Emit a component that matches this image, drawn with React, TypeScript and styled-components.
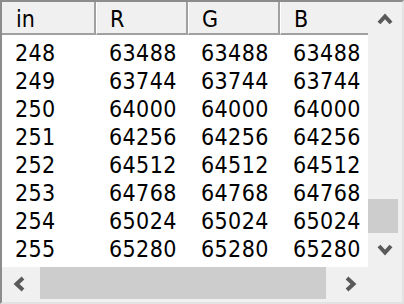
import React from "react";
import styled, {createGlobalStyle} from "styled-components";

const GlobalStyle = createGlobalStyle`
    html, body {
        margin: 0;
        padding: 0;
        background: #ffffff;
    }
`

const Frame = styled.div`
    box-sizing: border-box;
    width: 404px;
    height: 304px;
    border-style: solid;
    border-width: 2px;
    border-color: #8c8c8c #e3e3e3 #e3e3e3 #8c8c8c;
    display: grid;
    grid-template-columns: 366px 34px;
    grid-template-rows: 265px 35px;
    background: #f0f0f0;
    font-family: "DejaVu Sans Condensed", "Liberation Sans", sans-serif;
    color: #000;
`
const List = styled.div`
    background: #fff;
    overflow: hidden;
`
const HeaderRow = styled.div`
    display: flex;
    height: 33px;
    margin-bottom: 3px;
`
const HeaderCell = styled.div<{ $w: number; $first?: boolean; $last?: boolean }>`
    box-sizing: border-box;
    width: ${p => p.$w}px;
    flex: none;
    background: #f0f0f0;
    border-bottom: 2px solid #a0a0a0;
    border-right: ${p => p.$last ? "none" : "2px solid #a0a0a0"};
    border-left: ${p => p.$first ? "none" : "1px solid #ffffff"};
    padding-left: ${p => p.$first ? 14 : 13}px;
    font-size: 23px;
    line-height: 34px;
`
const Row = styled.div`
    display: flex;
    height: 28px;
`
const Cell = styled.div<{ $w: number }>`
    width: ${p => p.$w}px;
    flex: none;
    box-sizing: border-box;
    padding-left: 13px;
    font-size: 23px;
    letter-spacing: 0.4px;
    line-height: 30px;
`
const VScroll = styled.div`
    display: flex;
    flex-direction: column;
`
const HScroll = styled.div`
    display: flex;
`
const Button = styled.div`
    width: 34px;
    height: 34px;
    flex: none;
    display: flex;
    align-items: center;
    justify-content: center;
`
const VTrack = styled.div`
    flex: 1;
    display: flex;
    flex-direction: column;
    justify-content: flex-end;
`
const VThumb = styled.div`
    height: 34px;
    width: 30px;
    background: #cdcdcd;
`
const HTrack = styled.div`
    flex: 1;
    padding-left: 4px;
`
const HThumb = styled.div`
    width: 286px;
    height: 32px;
    background: #cdcdcd;
`

const widths = [94, 92, 92, 88]
const headers = ["in", "R", "G", "B"]

function Chevron({dir}: { dir: "up" | "down" | "left" | "right" }) {
    const pts: Record<string, string> = {
        up: "2,12 8,5.5 14,12",
        down: "2,4 8,10.5 14,4",
        left: "12,2 5.5,8 12,14",
        right: "4,2 10.5,8 4,14",
    }
    return (
        <svg width={16} height={16} viewBox="0 0 16 16">
            <polyline points={pts[dir]} fill="none" stroke="#5a5a5a" strokeWidth={4} strokeLinejoin="miter"/>
        </svg>
    )
}

export default function App() {
    const rows = []
    for (let i = 248; i <= 255; i++) {
        rows.push([i, i * 256, i * 256, i * 256])
    }
    return (
        <>
            <GlobalStyle/>
            <Frame>
                <List>
                    <HeaderRow>
                        {headers.map((h, i) =>
                            <HeaderCell key={h} $w={widths[i]} $first={i === 0} $last={i === 3}>{h}</HeaderCell>
                        )}
                    </HeaderRow>
                    {rows.map(r =>
                        <Row key={r[0]}>
                            {r.map((v, i) => <Cell key={i} $w={widths[i]}>{v}</Cell>)}
                        </Row>
                    )}
                </List>
                <VScroll>
                    <Button><Chevron dir="up"/></Button>
                    <VTrack><VThumb/></VTrack>
                    <Button><Chevron dir="down"/></Button>
                </VScroll>
                <HScroll>
                    <Button><Chevron dir="left"/></Button>
                    <HTrack><HThumb/></HTrack>
                    <Button><Chevron dir="right"/></Button>
                </HScroll>
                <div/>
            </Frame>
        </>
    )
}
